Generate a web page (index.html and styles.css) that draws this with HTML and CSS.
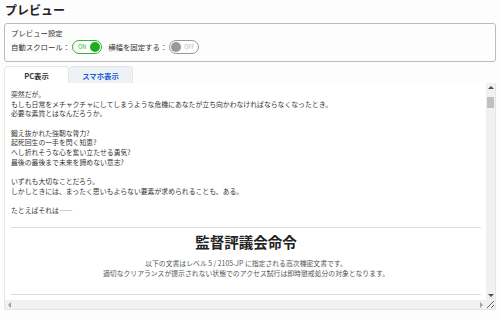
FILE: index.html
```html
<!DOCTYPE html>
<html lang="ja">
<head>
    <meta charset="UTF-8">
    <meta name="viewport" content="width=device-width, initial-scale=1.0">
    <title>プレビュー</title>
    <link rel="stylesheet" href="styles.css">
</head>
<body>
    <h1 class="page-title">プレビュー</h1>

    <div class="settings">
        <div class="settings-title">プレビュー設定</div>
        <div class="settings-row">
            <span class="setting-label">自動スクロール：</span>
            <span class="toggle on"><span class="toggle-text">ON</span><span class="knob"></span></span>
            <span class="setting-label">横幅を固定する：</span>
            <span class="toggle off"><span class="knob"></span><span class="toggle-text">OFF</span></span>
        </div>
    </div>

    <div class="tabs">
        <button class="tab tab-pc">PC表示</button>
        <button class="tab tab-sp">スマホ表示</button>
    </div>

    <div class="preview">
        <div class="doc">
            <p>突然だが。<br>もしも日常をメチャクチャにしてしまうような危機にあなたが立ち向かわなければならなくなったとき。<br>必要な素質とはなんだろうか。</p>
            <p>鍛え抜かれた強靭な膂力?<br>起死回生の一手を閃く知恵?<br>へし折れそうな心を奮い立たせる勇気?<br>最後の最後まで未来を諦めない意志?</p>
            <p>いずれも大切なことだろう。<br>しかしときには、まったく思いもよらない要素が求められることも、ある。</p>
            <p>たとえばそれは——</p>
            <hr>
            <h2 class="doc-heading">監督評議会命令</h2>
            <p class="doc-note">以下の文書はレベル 5 / 2105-JP に指定される高次機密文書です。<br>適切なクリアランスが提示されない状態でのアクセス試行は即時懲戒処分の対象となります。</p>
            <hr>
        </div>
        <!-- scrollbars -->
        <div class="vbar">
            <span class="arrow arrow-up"></span>
            <span class="thumb"></span>
            <span class="track"></span>
            <span class="arrow arrow-down"></span>
        </div>
        <div class="hbar">
            <span class="arrow arrow-left"></span>
            <span class="track"></span>
            <span class="arrow arrow-right"></span>
        </div>
        <div class="corner"></div>
    </div>
</body>
</html>
```

FILE: styles.css
```css
body {
    font-family: "Noto Sans CJK JP", "Noto Sans", sans-serif;
    background: #fdfdfd;
    color: #333;
    margin: 0 4px;
}
.page-title {
    font-size: 12px;
    font-weight: bold;
    line-height: 16px;
    margin: 2px 0 5px 1px;
    color: #222;
}
.settings {
    border: 1px solid #bbb;
    border-radius: 3px;
    padding: 3px 6px 7px;
    font-size: 7.4px;
    line-height: 12px;
}
.settings-title {
    margin-bottom: 1px;
}
.settings-row {
    display: flex;
    align-items: center;
    gap: 2px;
}
.toggle {
    display: inline-flex;
    align-items: center;
    justify-content: space-between;
    box-sizing: border-box;
    width: 30px;
    height: 14px;
    border-radius: 7px;
    padding: 0 1px 0 5px;
    font-size: 5.5px;
    margin-right: 4px;
}
.toggle.on {
    border: 1px solid #2eb82e;
    color: #2eb82e;
}
.toggle.off {
    border: 1px solid #999;
    color: #bbb;
    padding: 0 4px 0 1px;
}
.knob {
    width: 10px;
    height: 10px;
    border-radius: 50%;
}
.toggle.on .knob {
    background: #22aa22;
}
.toggle.off .knob {
    background: #999;
}
.tabs {
    display: flex;
    margin-top: 4px;
}
.tab {
    font-family: inherit;
    font-size: 7.4px;
    font-weight: bold;
    width: 65px;
    height: 17px;
    padding: 0;
    border: 1px solid #e6e6e6;
    border-bottom: none;
    border-radius: 4px 4px 0 0;
    background: #fff;
    color: #333;
}
.tab-sp {
    width: 64px;
    background: #eef2f6;
    color: #1a5fd6;
    border-left: none;
}
.preview {
    display: grid;
    grid-template-columns: 1fr 9px;
    grid-template-rows: 217px 9px;
    border: 1px solid #e6e6e6;
    border-top: none;
    overflow: hidden;
    resize: both;
    background: #fff;
}
.doc {
    overflow: hidden;
    padding: 7px 5px 0 6px;
    font-size: 6.85px;
    line-height: 9.65px;
    color: #333;
}
.doc p {
    margin: 0 0 9.65px;
}
.doc hr {
    border: none;
    border-top: 1.5px solid #ddd;
    margin: 12px 0 4px;
}
.doc-heading {
    text-align: center;
    font-size: 14.5px;
    line-height: 20px;
    margin: 0 0 7px;
    color: #222;
}
.doc .doc-note {
    text-align: center;
    color: #555;
    margin: 0 0 15px;
}
.vbar, .hbar, .corner {
    background: #f1f1f1;
    display: flex;
    align-items: center;
}
.vbar {
    flex-direction: column;
}
.arrow {
    width: 9px;
    height: 9px;
    display: flex;
    align-items: center;
    justify-content: center;
    flex: none;
}
.arrow::before {
    content: "";
    width: 0;
    height: 0;
    border: 3px solid transparent;
}
.arrow-up::before {
    border-top-width: 0;
    border-bottom-color: #505050;
}
.arrow-down::before {
    border-bottom-width: 0;
    border-top-color: #505050;
}
.arrow-left::before {
    border-left-width: 0;
    border-right-color: #a3a3a3;
}
.arrow-right::before {
    border-right-width: 0;
    border-left-color: #a3a3a3;
}
.thumb {
    width: 7px;
    height: 11px;
    margin-top: 5px;
    background: #c1c1c1;
    flex: none;
}
.track {
    flex: 1;
}
```
